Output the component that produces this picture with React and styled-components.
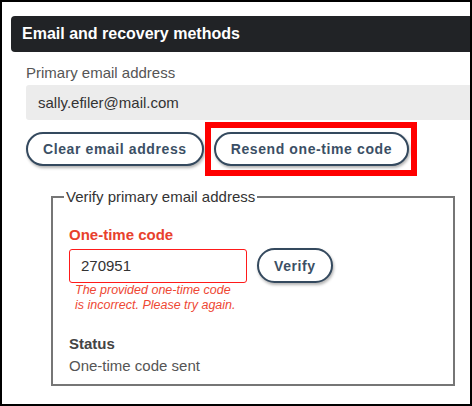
import React from "react";
import styled, { createGlobalStyle } from "styled-components";

const GlobalStyle = createGlobalStyle`
  html, body { margin: 0; padding: 0; background: #fff; }
  body { font-family: "Liberation Sans", Arial, sans-serif; }
  * { box-sizing: border-box; }
`;

const Frame = styled.div`
  width: 472px;
  height: 406px;
  border: 2px solid #000;
  background: #fff;
  overflow: hidden;
`;

const Header = styled.h2`
  margin: 14px 0 0 9px;
  height: 36px;
  padding-left: 11px;
  background: #212326;
  border-radius: 4px 0 0 4px;
  color: #fff;
  font-size: 16px;
  font-weight: bold;
  line-height: 36px;
`;

const Section = styled.div`
  padding-left: 24px;
`;

const FieldLabel = styled.div`
  margin-top: 12px;
  font-size: 15px;
  line-height: 18px;
  color: #555;
`;

const ReadOnlyValue = styled.div`
  margin-top: 3px;
  height: 35px;
  padding-left: 12px;
  background: #ececec;
  border-radius: 3px 0 0 3px;
  font-size: 15px;
  line-height: 35px;
  color: #333;
`;

const ButtonRow = styled.div`
  display: flex;
  gap: 10px;
  margin-top: 12px;
`;

const PillButton = styled.button`
  height: ${(p) => p.$h || 34}px;
  padding: 0 15px;
  border: 2px solid #34495e;
  border-radius: 18px;
  background: #fff;
  box-shadow: 1px 2px 3px rgba(0, 0, 0, 0.3);
  font-family: "Liberation Sans", Arial, sans-serif;
  font-size: 14px;
  font-weight: bold;
  letter-spacing: 0.6px;
  color: #3b4f65;
  white-space: nowrap;
  cursor: pointer;
`;

const Highlight = styled.span`
  position: relative;
  display: inline-flex;
  &::after {
    content: "";
    position: absolute;
    inset: -10px -8px -10px -9px;
    border: 6px solid #ff0000;
    pointer-events: none;
  }
`;

const Group = styled.fieldset`
  margin: 22px 15px 0 25px;
  padding: 20px 16px 9px 16px;
  border: 2px solid #767676;
  min-width: 0;
`;

const Legend = styled.legend`
  margin-left: -5px;
  padding: 0 2px;
  font-size: 15px;
  line-height: 18px;
  color: #333;
`;

const CodeLabel = styled.label`
  display: block;
  font-size: 15px;
  font-weight: bold;
  line-height: 18px;
  color: #e8412c;
`;

const CodeRow = styled.div`
  display: flex;
  align-items: center;
  gap: 10px;
  margin-top: 4px;
`;

const CodeInput = styled.input`
  width: 178px;
  height: 34px;
  padding: 0 0 0 11px;
  border: 1px solid #ff1a1a;
  border-radius: 3px;
  font-family: "Liberation Sans", Arial, sans-serif;
  font-size: 15px;
  color: #333;
  outline: none;
`;

const ErrorText = styled.div`
  width: 167px;
  padding-left: 6px;
  font-size: 12.5px;
  font-style: italic;
  line-height: 15px;
  color: #ee4733;
`;

const StatusTitle = styled.div`
  margin-top: 22px;
  font-size: 15px;
  font-weight: bold;
  line-height: 18px;
  color: #444;
`;

const StatusValue = styled.div`
  margin-top: 4px;
  font-size: 15px;
  line-height: 18px;
  color: #555;
`;

export default function App() {
  return (
    <>
      <GlobalStyle />
      <Frame>
        <Header>Email and recovery methods</Header>
        <Section>
          <FieldLabel>Primary email address</FieldLabel>
          <ReadOnlyValue>sally.efiler@mail.com</ReadOnlyValue>
          <ButtonRow>
            <PillButton>Clear email address</PillButton>
            <Highlight>
              <PillButton>Resend one-time code</PillButton>
            </Highlight>
          </ButtonRow>
          <Group>
            <Legend>Verify primary email address</Legend>
            <CodeLabel htmlFor="otc">One-time code</CodeLabel>
            <CodeRow>
              <CodeInput id="otc" defaultValue="270951" />
              <PillButton $h={35}>Verify</PillButton>
            </CodeRow>
            <ErrorText>
              The provided one-time code is incorrect. Please try again.
            </ErrorText>
            <StatusTitle>Status</StatusTitle>
            <StatusValue>One-time code sent</StatusValue>
          </Group>
        </Section>
      </Frame>
    </>
  );
}
